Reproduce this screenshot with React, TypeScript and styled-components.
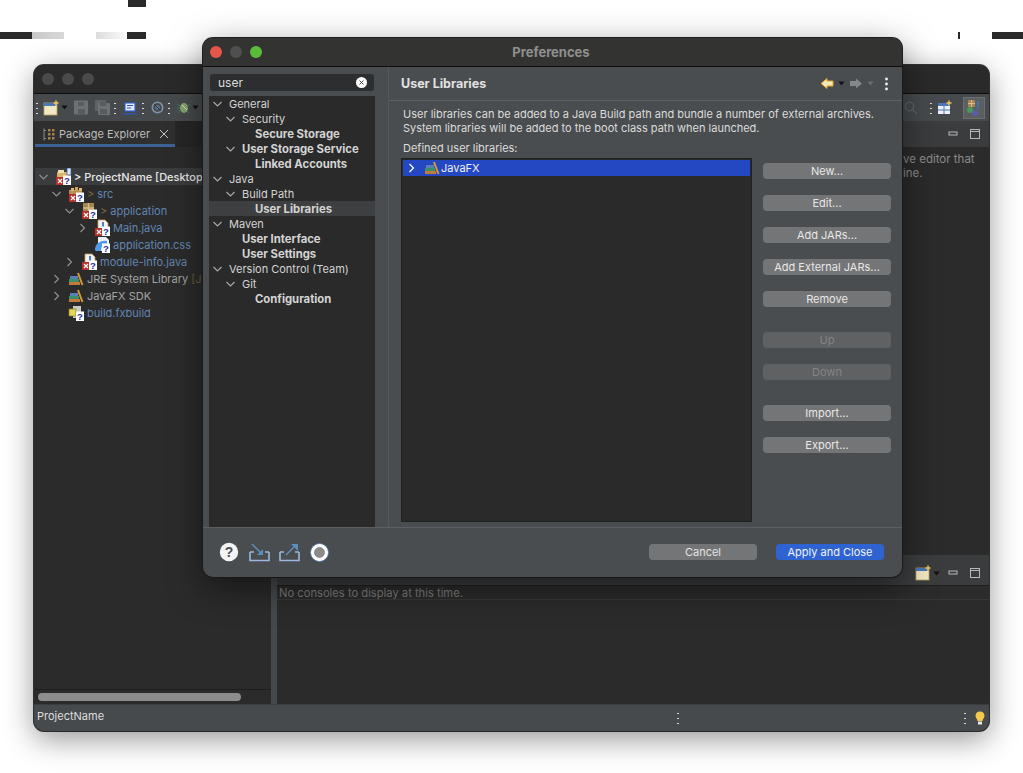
import React from "react";
import styled, { createGlobalStyle } from "styled-components";

const GlobalStyle = createGlobalStyle`
  html, body {
    margin: 0;
    padding: 0;
    background: #fff;
    font-family: "Inter", "Liberation Sans", sans-serif;
  }
  * { box-sizing: border-box; }
`;

const Desktop = styled.div`
  position: relative;
  width: 1023px;
  height: 773px;
  overflow: hidden;
  background: #fff;
`;

const Glitch = styled.div<{ $x: number; $y: number; $w: number; $bg: string }>`
  position: absolute;
  left: ${(p) => p.$x}px;
  top: ${(p) => p.$y}px;
  width: ${(p) => p.$w}px;
  height: 7px;
  background: ${(p) => p.$bg};
`;

/* main eclipse window */
const MainWindow = styled.div`
  position: absolute;
  left: 34px;
  top: 65px;
  width: 955px;
  height: 666px;
  display: flex;
  flex-direction: column;
  border-radius: 10px;
  overflow: hidden;
  background: #2b2b2b;
  box-shadow: 0 8px 30px rgba(0, 0, 0, 0.42), 0 0 0 1px #3a3a3a;
`;

const MainTitle = styled.div`
  height: 29px;
  flex: none;
  display: flex;
  align-items: center;
  gap: 8px;
  padding-left: 8px;
  background: #2a2a2a;
  border-bottom: 1px solid #0d0d0d;
`;

const Light = styled.span<{ $color: string }>`
  width: 12px;
  height: 12px;
  border-radius: 50%;
  background: ${(p) => p.$color};
`;

const Toolbar = styled.div`
  height: 27px;
  flex: none;
  display: flex;
  align-items: center;
  padding: 0 4px 0 2px;
  background: #474a4c;
`;

const ToolDots = styled.span<{ $ml?: number }>`
  width: 2px;
  height: 14px;
  margin-left: ${(p) => p.$ml ?? 0}px;
  flex: none;
  background-image: radial-gradient(circle, #d8d8d8 1px, transparent 1.1px);
  background-size: 2px 5px;
`;

const ToolIcon = styled.span<{ $ml?: number }>`
  display: flex;
  flex: none;
  margin-left: ${(p) => p.$ml ?? 0}px;
`;

const ToolSpacer = styled.div`
  flex: 1;
`;

const PerspectiveBox = styled.span`
  display: flex;
  align-items: center;
  justify-content: center;
  width: 22px;
  height: 22px;
  margin-left: 11px;
  background: #5c5f61;
  border: 1px solid #6c6f71;
`;

const MainBody = styled.div`
  flex: 1;
  min-height: 0;
  display: flex;
`;

const ExplorerPane = styled.div`
  width: 237px;
  flex: none;
  display: flex;
  flex-direction: column;
  padding-left: 1px;
  background: #2b2b2b;
`;

const TabStrip = styled.div`
  height: 26px;
  flex: none;
  display: flex;
  background: #262626;
`;

const ExplorerTab = styled.div`
  width: 140px;
  display: flex;
  align-items: center;
  gap: 3px;
  padding: 3px 0 0 8px;
  font-size: 11px;
  white-space: nowrap;
  color: #bdbdbd;
  background: #2f2f2f;
  border-bottom: 3px solid #3d6296;
`;

const TabClose = styled.span`
  margin-left: 6px;
  display: flex;
`;

const ExplorerTree = styled.div`
  flex: 1;
  padding-top: 21px;
  overflow: hidden;
`;

const ExplorerRow = styled.div<{ $level: number; $active?: boolean }>`
  height: 17px;
  display: flex;
  align-items: center;
  white-space: nowrap;
  padding-left: ${(p) => 2 + p.$level * 13}px;
  font-size: 11px;
  background: ${(p) => (p.$active ? "#3b3c3d" : "transparent")};
`;

const ChevronSlot = styled.span`
  width: 18px;
  flex: none;
  display: flex;
`;

const NodeIcon = styled.span`
  width: 19px;
  flex: none;
  display: flex;
`;

const NodeName = styled.span<{ $tone: "project" | "source" | "plain" }>`
  color: ${(p) =>
    p.$tone === "project" ? "#e8e8e8" : p.$tone === "source" ? "#6285b2" : "#a4a4a4"};
  font-weight: ${(p) => (p.$tone === "project" ? 500 : 400)};
`;

const Decoration = styled.span`
  color: #7d6a3c;
  margin-right: 3px;
`;

const Suffix = styled.span`
  color: #6b5d3a;
  margin-left: 3px;
`;

const ScrollTrack = styled.div`
  height: 15px;
  flex: none;
  padding: 3px 0 0 3px;
  border-top: 1px solid #1d1d1d;
`;

const ScrollThumb = styled.div`
  width: 203px;
  height: 8px;
  border-radius: 4px;
  background: #8d8d8d;
`;

const Sash = styled.div`
  width: 6px;
  flex: none;
  background: #46494b;
`;

const RightColumn = styled.div`
  flex: 1;
  min-width: 0;
  display: flex;
  flex-direction: column;
`;

const OutlinePane = styled.div`
  flex: 1;
  display: flex;
  flex-direction: column;
  background: #2b2b2b;
`;

const PaneHeader = styled.div<{ $h: number; $pt?: number }>`
  height: ${(p) => p.$h}px;
  flex: none;
  display: flex;
  align-items: center;
  justify-content: flex-end;
  gap: 10px;
  padding: ${(p) => p.$pt ?? 0}px 8px 0 0;
  background: #3a3c3e;
`;

const NewConsoleGroup = styled.span`
  display: flex;
  align-items: center;
  gap: 1px;
  margin-right: -2px;
`;

const OutlineText = styled.div`
  margin: 5px 0 0 626px;
  font-size: 11.5px;
  line-height: 14px;
  white-space: nowrap;
  color: #8c8c8c;
`;

const ConsolePane = styled.div`
  height: 149px;
  flex: none;
  display: flex;
  flex-direction: column;
  background: #2b2b2b;
`;

const ConsoleText = styled.div`
  height: 15px;
  flex: none;
  padding-left: 2px;
  font-size: 11.2px;
  line-height: 14px;
  color: #7b7b7b;
  border-top: 1px solid #1f1f1f;
  border-bottom: 1px solid #383838;
`;

const StatusBar = styled.div`
  height: 27px;
  flex: none;
  display: flex;
  align-items: center;
  padding: 0 3px;
  font-size: 11px;
  color: #dedede;
  background: #474a4c;
  border-top: 1px solid #3a3c3e;
`;

const StatusName = styled.span`
  width: 640px;
  margin-top: -4px;
`;

const StatusGap = styled.div`
  width: 285px;
`;

/* preferences dialog */
const Dialog = styled.div`
  position: absolute;
  left: 203px;
  top: 38px;
  width: 699px;
  height: 539px;
  display: flex;
  flex-direction: column;
  border-radius: 10px;
  overflow: hidden;
  background: #4a4d4f;
  box-shadow: 0 10px 34px rgba(0, 0, 0, 0.5), 0 0 0 1px #232323;
`;

const DialogTitle = styled.div`
  position: relative;
  height: 29px;
  flex: none;
  display: flex;
  align-items: center;
  gap: 8px;
  padding-left: 7px;
  background: #333331;
  border-bottom: 1px solid #0e0e0e;
`;

const DialogCaption = styled.span`
  position: absolute;
  left: 0;
  right: 0;
  padding-right: 3px;
  text-align: center;
  font-size: 13px;
  font-weight: 700;
  color: #8f8f8f;
`;

const DialogBody = styled.div`
  flex: 1;
  min-height: 0;
  display: flex;
`;

const Sidebar = styled.div`
  width: 172px;
  flex: none;
  display: flex;
  flex-direction: column;
  padding: 7px 0 0 6px;
`;

const SearchBox = styled.div`
  width: 164px;
  height: 17px;
  margin-left: 1px;
  flex: none;
  display: flex;
  align-items: center;
  justify-content: space-between;
  padding: 0 7px 0 8px;
  border-radius: 3px;
  font-size: 12px;
  color: #dcdcdc;
  background: #2d2e2f;
`;

const SearchClear = styled.span`
  width: 11px;
  height: 11px;
  display: flex;
  align-items: center;
  justify-content: center;
  border-radius: 50%;
  background: #fff;
`;

const PrefTree = styled.div`
  width: 166px;
  flex: 1;
  margin-top: 5px;
  background: #2a2a2a;
`;

const PrefRow = styled.div<{ $level: number; $active?: boolean; $match?: boolean }>`
  height: 15px;
  display: flex;
  align-items: center;
  white-space: nowrap;
  padding-left: ${(p) => 2 + p.$level * 13}px;
  font-size: ${(p) => (p.$match ? 11.3 : 11)}px;
  font-weight: ${(p) => (p.$match ? 700 : 400)};
  color: #d4d4d4;
  background: ${(p) => (p.$active ? "#3e3f40" : "transparent")};
`;

const PrefChevron = styled.span`
  width: 18px;
  flex: none;
  display: flex;
`;

const ContentPane = styled.div`
  flex: 1;
  min-width: 0;
  display: flex;
  flex-direction: column;
  margin-left: 13px;
  border-left: 1px solid #55585a;
`;

const ContentHeader = styled.div`
  height: 34px;
  flex: none;
  display: flex;
  align-items: center;
  justify-content: space-between;
  padding: 0 14px 0 12px;
  font-size: 12.5px;
  font-weight: 700;
  color: #e2e2e2;
  border-bottom: 1px solid #5d6062;
`;

const HistoryIcons = styled.div`
  display: flex;
  align-items: center;
  gap: 4px;
`;

const DotsSlot = styled.span`
  display: flex;
  margin-left: 7px;
`;

const ContentMain = styled.div`
  flex: 1;
  min-height: 0;
  display: flex;
  flex-direction: column;
  padding: 6px 11px 5px 12px;
`;

const Description = styled.p`
  margin: 0 0 0 2px;
  font-size: 11px;
  line-height: 14px;
  color: #dcdcdc;
`;

const FieldLabel = styled.div`
  margin: 6px 0 3px 2px;
  font-size: 11px;
  line-height: 14px;
  color: #dcdcdc;
`;

const ListRow = styled.div`
  flex: 1;
  min-height: 0;
  display: flex;
  gap: 11px;
`;

const LibraryList = styled.div`
  width: 351px;
  flex: none;
  padding: 1px;
  background: #2a2a2a;
  border: 1px solid #1f2020;
`;

const LibraryItem = styled.div`
  height: 16px;
  display: flex;
  align-items: center;
  padding-left: 2px;
  font-size: 11px;
  color: #f0f0f0;
  background: #2348c2;
`;

const ListChevron = styled.span`
  width: 19px;
  flex: none;
  display: flex;
`;

const ListIcon = styled.span`
  width: 17px;
  flex: none;
  display: flex;
`;

const ButtonColumn = styled.div`
  width: 128px;
  flex: none;
  display: flex;
  flex-direction: column;
  padding-top: 5px;
`;

const SideButton = styled.button<{ $gap?: number }>`
  height: 16px;
  flex: none;
  margin-bottom: ${(p) => p.$gap ?? 16}px;
  padding: 0;
  border: none;
  border-radius: 4px;
  font-family: inherit;
  font-size: 11px;
  color: #e8e8e8;
  background: #747576;
  &:disabled {
    color: #838587;
    background: #5f6163;
  }
`;

const DialogFooter = styled.div`
  height: 50px;
  flex: none;
  display: flex;
  align-items: center;
  justify-content: space-between;
  padding: 0 18px 1px 16px;
  border-top: 1px solid #5d6062;
`;

const FooterIcons = styled.div`
  display: flex;
  align-items: center;
  gap: 9.5px;
`;

const FooterButtons = styled.div`
  display: flex;
  gap: 19px;
`;

const FooterButton = styled.button<{ $primary?: boolean }>`
  width: 108px;
  height: 16px;
  padding: 0;
  border: none;
  border-radius: 4px;
  font-family: inherit;
  font-size: 11px;
  color: ${(p) => (p.$primary ? "#f2f4fa" : "#e4e4e4")};
  background: ${(p) => (p.$primary ? "#2f63d2" : "#747576")};
`;

/* drawn icons */
const Chevron = ({ open, color = "#a8a8a8" }: { open?: boolean; color?: string }) => (
  <svg width="14" height="10" viewBox="0 0 14 10" fill="none">
    {open ? (
      <path d="M2.5 3 L6.5 7 L10.5 3" stroke={color} strokeWidth="1.2" />
    ) : (
      <path d="M4.5 1 L8.5 5 L4.5 9" stroke={color} strokeWidth="1.2" />
    )}
  </svg>
);

const Badges = ({ red = true }: { red?: boolean }) => (
  <>
    {red && (
      <>
        <rect x="1" y="9" width="8" height="8" fill="#b5302a" />
        <path d="M3 11 L7 15 M7 11 L3 15" stroke="#fff" strokeWidth="1.2" />
      </>
    )}
    <rect x="8" y="7.5" width="8" height="9.5" fill="#fff" />
    <text x="12" y="16" textAnchor="middle" fontSize="9.5" fontWeight="700" fill="#1b2a9a" fontFamily="Liberation Sans">
      ?
    </text>
  </>
);

const ProjectIcon = () => (
  <svg width="17" height="18" viewBox="0 0 17 18">
    <rect x="2" y="4" width="11" height="8" rx="1" fill="#d9b56c" />
    <rect x="3" y="2" width="6" height="3" fill="#efe0b0" />
    <rect x="12" y="0" width="4" height="7" fill="#dfe6f5" stroke="#2b4d9c" strokeWidth="0.7" />
    <Badges />
  </svg>
);

const FolderIcon = () => (
  <svg width="17" height="18" viewBox="0 0 17 18">
    <rect x="1" y="5" width="13" height="8" fill="#b58f55" />
    <rect x="3" y="3" width="3" height="3" fill="#e0b877" />
    <rect x="7" y="2" width="3" height="4" fill="#d49f57" />
    <rect x="11" y="3" width="3" height="3" fill="#e0b877" />
    <Badges />
  </svg>
);

const PackageIcon = () => (
  <svg width="17" height="18" viewBox="0 0 17 18">
    <rect x="2" y="1" width="11" height="11" fill="#a58553" />
    <path d="M2 6 H13 M7.5 1 V12" stroke="#d8bb88" strokeWidth="1.3" />
    <Badges />
  </svg>
);

const JavaFileIcon = () => (
  <svg width="17" height="18" viewBox="0 0 17 18">
    <path d="M4 1 H11 L14 4 V14 H4 Z" fill="#f3f3f3" stroke="#c29a54" strokeWidth="0.8" />
    <path d="M9 3 V10" stroke="#2f5fb8" strokeWidth="1.6" />
    <path d="M6.5 11 C8 12.5 10 12.5 11.5 11" stroke="#2f5fb8" strokeWidth="1" fill="none" />
    <Badges />
  </svg>
);

const CssIcon = () => (
  <svg width="17" height="18" viewBox="0 0 17 18">
    <path d="M4 1 H12 L15 4 V15 H4 Z" fill="#f1f1f1" />
    <path d="M1 14 C1 8 6 4 13 5 V9 C9 8 7 10 7 15 L2 15 Z" fill="#4f9be8" />
    <Badges red={false} />
  </svg>
);

const LibraryIcon = () => (
  <svg width="16" height="14" viewBox="0 0 16 14">
    <rect x="1" y="10" width="11" height="3" fill="#c07a3b" />
    <rect x="1" y="7" width="10" height="3" fill="#3d8f6a" />
    <rect x="2" y="4" width="8" height="3" fill="#5a7fb5" />
    <path d="M10 1 L14.5 13" stroke="#d79a33" strokeWidth="2" />
  </svg>
);

const BuildIcon = () => (
  <svg width="17" height="18" viewBox="0 0 17 18">
    <path d="M5 2 H13 V14 H5 Z" fill="#c9c9c9" />
    <rect x="1" y="5" width="7" height="7" fill="#e5d45a" stroke="#8a7c20" strokeWidth="0.7" />
    <Badges red={false} />
  </svg>
);

const NewWindowIcon = () => (
  <svg width="17" height="16" viewBox="0 0 17 16">
    <rect x="1" y="3" width="13" height="12" fill="#f0e7c4" stroke="#b9a060" strokeWidth="0.8" />
    <rect x="1" y="3" width="13" height="3" fill="#4a78b5" />
    <path d="M13 0.5 V6 M10.5 3 H15.5" stroke="#f0c65a" strokeWidth="1.5" />
  </svg>
);

const SmallCaret = ({ color = "#111" }: { color?: string }) => (
  <svg width="7" height="5" viewBox="0 0 7 5">
    <path d="M0.5 0.5 H6.5 L3.5 4.5 Z" fill={color} />
  </svg>
);

const SaveIcon = ({ stacked }: { stacked?: boolean }) => (
  <svg width="16" height="15" viewBox="0 0 16 15">
    {stacked && <rect x="0" y="0" width="11" height="11" rx="1" fill="#5f6365" />}
    <rect x={stacked ? 3 : 1} y={stacked ? 3 : 0.5} width={stacked ? 12 : 14} height={stacked ? 12 : 14} rx="1" fill="#6d7173" />
    <rect x="5" y="2" width="6" height="4" fill="#595c5e" />
    <rect x="5" y="9" width="7" height="5" fill="#595c5e" />
  </svg>
);

const ConsoleIcon = () => (
  <svg width="14" height="14" viewBox="0 0 14 14">
    <rect x="1" y="1" width="12" height="10" rx="1" fill="#2f55a8" />
    <rect x="2.5" y="2.5" width="9" height="7" fill="#dfe7f7" />
    <path d="M4 4.5 H10 M4 7 H8" stroke="#2f55a8" />
    <rect x="0" y="12" width="14" height="1.5" fill="#2f55a8" />
  </svg>
);

const TargetIcon = () => (
  <svg width="13" height="13" viewBox="0 0 13 13" fill="none">
    <circle cx="6.5" cy="6.5" r="5.2" stroke="#7f93a8" strokeWidth="1.6" />
    <circle cx="6.5" cy="6.5" r="2.4" fill="#5c7692" />
    <path d="M3 3 L10 10" stroke="#30353a" />
  </svg>
);

const BugIcon = () => (
  <svg width="15" height="15" viewBox="0 0 15 15" fill="none">
    <ellipse cx="8" cy="8" rx="4" ry="5" fill="#87a26c" />
    <path d="M6 5 L11 10" stroke="#d8e2c8" />
    <path d="M1 4 L4 6 M1 8 H4 M2 13 L4 10 M14 4 L12 6 M13 13 L11 11" stroke="#3a7a6a" />
  </svg>
);

const SearchGlyph = () => (
  <svg width="14" height="14" viewBox="0 0 14 14" fill="none" stroke="#5d6062" strokeWidth="1.5">
    <circle cx="5.5" cy="5.5" r="4.2" />
    <path d="M8.5 8.5 L13 13" />
  </svg>
);

const OpenPerspectiveIcon = () => (
  <svg width="15" height="15" viewBox="0 0 15 15">
    <rect x="1" y="3" width="12" height="11" fill="#eef2f8" />
    <rect x="1" y="3" width="12" height="3" fill="#4a78b5" />
    <path d="M7 6 V14 M1 10 H13" stroke="#4a78b5" />
    <path d="M12 0.5 V5.5 M9.5 3 H14.5" stroke="#f0c65a" strokeWidth="1.4" />
  </svg>
);

const JavaPerspectiveIcon = () => (
  <svg width="16" height="18" viewBox="0 0 16 18">
    <rect x="2" y="1" width="7" height="7" fill="#a58553" />
    <path d="M2 4.5 H9 M5.5 1 V8" stroke="#d8bb88" />
    <circle cx="4" cy="11" r="3" fill="#4a9a58" />
    <circle cx="9" cy="14" r="3" fill="#5b5fa8" />
    <path d="M12 2 V10" stroke="#3f77c4" strokeWidth="1.5" />
  </svg>
);

const MinimizeIcon = () => (
  <svg width="11" height="6" viewBox="0 0 11 6" fill="none">
    <rect x="1" y="1" width="8" height="3" stroke="#b8b8b8" />
  </svg>
);

const MaximizeIcon = () => (
  <svg width="12" height="12" viewBox="0 0 12 12" fill="none" stroke="#b8b8b8">
    <rect x="1.5" y="1.5" width="9" height="9" />
    <path d="M1.5 3.5 H10.5" />
  </svg>
);

const ExplorerGlyph = () => (
  <svg width="13" height="13" viewBox="0 0 13 13" fill="none">
    <path d="M1 0.5 V12.5 M1 2.5 H3 M1 10.5 H3" stroke="#8a8a8a" />
    <rect x="5" y="1" width="2.5" height="2.5" fill="#a5834f" />
    <rect x="9" y="1" width="2.5" height="2.5" fill="#a5834f" />
    <rect x="5" y="5" width="2.5" height="2.5" fill="#a5834f" />
    <rect x="9" y="5" width="2.5" height="2.5" fill="#a5834f" />
    <rect x="5" y="9" width="2.5" height="2.5" fill="#a5834f" />
    <rect x="9" y="9" width="2.5" height="2.5" fill="#a5834f" />
  </svg>
);

const CloseX = () => (
  <svg width="10" height="10" viewBox="0 0 10 10" stroke="#c8c8c8" strokeWidth="1">
    <path d="M1 1 L9 9 M9 1 L1 9" />
  </svg>
);

const ClearX = () => (
  <svg width="5" height="5" viewBox="0 0 5 5" stroke="#333" strokeWidth="0.9">
    <path d="M0.5 0.5 L4.5 4.5 M4.5 0.5 L0.5 4.5" />
  </svg>
);

const ArrowLeft = () => (
  <svg width="14" height="13" viewBox="0 0 14 13">
    <path d="M1 6.5 L7 1.5 V4 H13 V9 H7 V11.5 Z" fill="#f6e9b8" stroke="#e0a52c" strokeWidth="1" />
  </svg>
);

const ArrowRight = () => (
  <svg width="14" height="13" viewBox="0 0 14 13">
    <path d="M13 6.5 L7 1.5 V4 H1 V9 H7 V11.5 Z" fill="#85888a" />
  </svg>
);

const MenuDots = () => (
  <svg width="3" height="14" viewBox="0 0 3 14" fill="#f2f2f2">
    <circle cx="1.5" cy="2" r="1.4" />
    <circle cx="1.5" cy="7" r="1.4" />
    <circle cx="1.5" cy="12" r="1.4" />
  </svg>
);

const HelpIcon = () => (
  <svg width="20" height="20" viewBox="0 0 20 20">
    <circle cx="10" cy="10" r="9.2" fill="#f4f4f4" />
    <text x="10" y="15" textAnchor="middle" fontSize="14" fontWeight="700" fill="#4a4d4f" fontFamily="Liberation Sans">
      ?
    </text>
  </svg>
);

const ImportIcon = () => (
  <svg width="21" height="19" viewBox="0 0 21 19" fill="none">
    <path d="M1 9 V17.5 H20 V9 M1 9 H5 M16 9 H20" stroke="#9db8de" strokeWidth="1.6" />
    <path d="M3 1 L13 11" stroke="#5b8fc0" strokeWidth="1.4" />
    <path d="M14 6 V12 H8 Z" fill="#5b8fc0" />
  </svg>
);

const ExportIcon = () => (
  <svg width="21" height="19" viewBox="0 0 21 19" fill="none">
    <path d="M1 9 V17.5 H20 V9 M1 9 H5 M16 9 H20" stroke="#9db8de" strokeWidth="1.6" />
    <path d="M7 12 L17 2" stroke="#5b8fc0" strokeWidth="1.4" />
    <path d="M12 1 H19 V8 Z" fill="#5b8fc0" />
  </svg>
);

const RecordIcon = () => (
  <svg width="19" height="19" viewBox="0 0 19 19">
    <circle cx="9.5" cy="9.5" r="9" fill="#fff" stroke="#4a74b5" strokeWidth="0.7" />
    <circle cx="9.5" cy="9.5" r="5" fill="#8b8b8b" stroke="#6a6a6a" strokeWidth="0.6" />
  </svg>
);

const BulbIcon = () => (
  <svg width="10" height="14" viewBox="0 0 10 14">
    <path d="M5 0.5 C8 0.5 9.5 2.5 9.5 5 C9.5 7 7.5 8 7.5 10 H2.5 C2.5 8 0.5 7 0.5 5 C0.5 2.5 2 0.5 5 0.5 Z" fill="#f2c94c" />
    <rect x="3" y="10.5" width="4" height="3" fill="#e8e8e8" />
  </svg>
);

type ExplorerNode = {
  level: number;
  open?: boolean;
  leaf?: boolean;
  icon: React.ReactNode;
  name: string;
  tone: "project" | "source" | "plain";
  prefix?: boolean;
  suffix?: string;
  active?: boolean;
};

// names stop where the dialog covers them in the screenshot
const explorerNodes: ExplorerNode[] = [
  { level: 0, open: true, icon: <ProjectIcon />, name: "> ProjectName [Desktop", tone: "project", active: true },
  { level: 1, open: true, icon: <FolderIcon />, name: "src", tone: "source", prefix: true },
  { level: 2, open: true, icon: <PackageIcon />, name: "application", tone: "source", prefix: true },
  { level: 3, icon: <JavaFileIcon />, name: "Main.java", tone: "source" },
  { level: 3, leaf: true, icon: <CssIcon />, name: "application.css", tone: "source" },
  { level: 2, icon: <JavaFileIcon />, name: "module-info.java", tone: "source" },
  { level: 1, icon: <LibraryIcon />, name: "JRE System Library", tone: "plain", suffix: "[J" },
  { level: 1, icon: <LibraryIcon />, name: "JavaFX SDK", tone: "plain" },
  { level: 1, leaf: true, icon: <BuildIcon />, name: "build.fxbuild", tone: "source" },
];

const prefNodes: { level: number; name: string; open?: boolean; match?: boolean; active?: boolean }[] = [
  { level: 0, name: "General", open: true },
  { level: 1, name: "Security", open: true },
  { level: 2, name: "Secure Storage", match: true },
  { level: 1, name: "User Storage Service", open: true, match: true },
  { level: 2, name: "Linked Accounts", match: true },
  { level: 0, name: "Java", open: true },
  { level: 1, name: "Build Path", open: true },
  { level: 2, name: "User Libraries", match: true, active: true },
  { level: 0, name: "Maven", open: true },
  { level: 1, name: "User Interface", match: true },
  { level: 1, name: "User Settings", match: true },
  { level: 0, name: "Version Control (Team)", open: true },
  { level: 1, name: "Git", open: true },
  { level: 2, name: "Configuration", match: true },
];

const sideButtons: { label: string; gap: number; disabled?: boolean }[] = [
  { label: "New...", gap: 16 },
  { label: "Edit...", gap: 16 },
  { label: "Add JARs...", gap: 16 },
  { label: "Add External JARs...", gap: 16 },
  { label: "Remove", gap: 25 },
  { label: "Up", gap: 16, disabled: true },
  { label: "Down", gap: 25, disabled: true },
  { label: "Import...", gap: 16 },
  { label: "Export...", gap: 16 },
];

export default function App() {
  return (
    <Desktop>
      <GlobalStyle />
      <Glitch $x={128} $y={0} $w={18} $bg="#2a2a2a" />
      <Glitch $x={0} $y={32} $w={32} $bg="#2a2a2a" />
      <Glitch $x={32} $y={32} $w={32} $bg="linear-gradient(90deg,#c8c8c8,#d8d8d8)" />
      <Glitch $x={96} $y={32} $w={31} $bg="linear-gradient(90deg,#dcdcdc,#fbfbfb)" />
      <Glitch $x={127} $y={32} $w={19} $bg="#2a2a2a" />
      <Glitch $x={958} $y={32} $w={2} $bg="#2a2a2a" />
      <Glitch $x={992} $y={32} $w={31} $bg="#2a2a2a" />

      <MainWindow>
        <MainTitle>
          <Light $color="#4a4a4a" />
          <Light $color="#4a4a4a" />
          <Light $color="#4a4a4a" />
        </MainTitle>
        <Toolbar>
          <ToolDots />
          <ToolIcon $ml={5}><NewWindowIcon /></ToolIcon>
          <ToolIcon $ml={1}><SmallCaret /></ToolIcon>
          <ToolIcon $ml={5}><SaveIcon /></ToolIcon>
          <ToolIcon $ml={6}><SaveIcon stacked /></ToolIcon>
          <ToolDots $ml={3} />
          <ToolIcon $ml={7}><ConsoleIcon /></ToolIcon>
          <ToolDots $ml={5} />
          <ToolIcon $ml={7}><TargetIcon /></ToolIcon>
          <ToolDots $ml={4} />
          <ToolIcon $ml={6}><BugIcon /></ToolIcon>
          <ToolIcon $ml={1}><SmallCaret /></ToolIcon>
          <ToolSpacer />
          <SearchGlyph />
          <ToolDots $ml={12} />
          <ToolIcon $ml={5}><OpenPerspectiveIcon /></ToolIcon>
          <PerspectiveBox><JavaPerspectiveIcon /></PerspectiveBox>
        </Toolbar>
        <MainBody>
          <ExplorerPane>
            <TabStrip>
              <ExplorerTab>
                <ExplorerGlyph />
                Package Explorer
                <TabClose><CloseX /></TabClose>
              </ExplorerTab>
            </TabStrip>
            <ExplorerTree>
              {explorerNodes.map((n) => (
                <ExplorerRow key={n.name} $level={n.level} $active={n.active}>
                  <ChevronSlot>{!n.leaf && <Chevron open={n.open} color="#8f8f8f" />}</ChevronSlot>
                  <NodeIcon>{n.icon}</NodeIcon>
                  {n.prefix && <Decoration>&gt;</Decoration>}
                  <NodeName $tone={n.tone}>{n.name}</NodeName>
                  {n.suffix && <Suffix>{n.suffix}</Suffix>}
                </ExplorerRow>
              ))}
            </ExplorerTree>
            <ScrollTrack>
              <ScrollThumb />
            </ScrollTrack>
          </ExplorerPane>
          <Sash />
          <RightColumn>
            <OutlinePane>
              <PaneHeader $h={26}>
                <MinimizeIcon />
                <MaximizeIcon />
              </PaneHeader>
              <OutlineText>
                ve editor that
                <br />
                ine.
              </OutlineText>
            </OutlinePane>
            <ConsolePane>
              <PaneHeader $h={30} $pt={6}>
                <NewConsoleGroup>
                  <NewWindowIcon />
                  <SmallCaret />
                </NewConsoleGroup>
                <MinimizeIcon />
                <MaximizeIcon />
              </PaneHeader>
              <ConsoleText>No consoles to display at this time.</ConsoleText>
            </ConsolePane>
          </RightColumn>
        </MainBody>
        <StatusBar>
          <StatusName>ProjectName</StatusName>
          <ToolDots />
          <StatusGap />
          <ToolDots />
          <ToolIcon $ml={9}><BulbIcon /></ToolIcon>
        </StatusBar>
      </MainWindow>

      <Dialog>
        <DialogTitle>
          <Light $color="#e5574a" />
          <Light $color="#4f4f4f" />
          <Light $color="#5bbb3d" />
          <DialogCaption>Preferences</DialogCaption>
        </DialogTitle>
        <DialogBody>
          <Sidebar>
            <SearchBox>
              user
              <SearchClear><ClearX /></SearchClear>
            </SearchBox>
            <PrefTree>
              {prefNodes.map((n) => (
                <PrefRow key={n.name} $level={n.level} $active={n.active} $match={n.match}>
                  <PrefChevron>{n.open && <Chevron open />}</PrefChevron>
                  {n.name}
                </PrefRow>
              ))}
            </PrefTree>
          </Sidebar>
          <ContentPane>
            <ContentHeader>
              User Libraries
              <HistoryIcons>
                <ArrowLeft />
                <SmallCaret />
                <ArrowRight />
                <SmallCaret color="#6b6e70" />
                <DotsSlot><MenuDots /></DotsSlot>
              </HistoryIcons>
            </ContentHeader>
            <ContentMain>
              <Description>
                User libraries can be added to a Java Build path and bundle a number of external archives.
                <br />
                System libraries will be added to the boot class path when launched.
              </Description>
              <FieldLabel>Defined user libraries:</FieldLabel>
              <ListRow>
                <LibraryList>
                  <LibraryItem>
                    <ListChevron><Chevron color="#fff" /></ListChevron>
                    <ListIcon><LibraryIcon /></ListIcon>
                    JavaFX
                  </LibraryItem>
                </LibraryList>
                <ButtonColumn>
                  {sideButtons.map((b) => (
                    <SideButton key={b.label} $gap={b.gap} disabled={b.disabled}>
                      {b.label}
                    </SideButton>
                  ))}
                </ButtonColumn>
              </ListRow>
            </ContentMain>
          </ContentPane>
        </DialogBody>
        <DialogFooter>
          <FooterIcons>
            <HelpIcon />
            <ImportIcon />
            <ExportIcon />
            <RecordIcon />
          </FooterIcons>
          <FooterButtons>
            <FooterButton>Cancel</FooterButton>
            <FooterButton $primary>Apply and Close</FooterButton>
          </FooterButtons>
        </DialogFooter>
      </Dialog>
    </Desktop>
  );
}
